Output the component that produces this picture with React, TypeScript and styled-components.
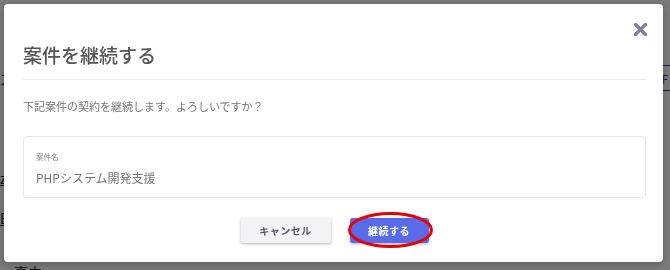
import styled, { createGlobalStyle } from "styled-components";

const GlobalStyle = createGlobalStyle`
  html, body {
    margin: 0;
    padding: 0;
    width: 670px;
    height: 270px;
    overflow: hidden;
    background: #ffffff;
    font-family: "Noto Sans CJK JP", "Noto Sans", sans-serif;
  }
`;

const Page = styled.div`
  position: relative;
  width: 670px;
  height: 270px;
  display: flex;
  justify-content: space-between;
`;

const SideList = styled.ul`
  list-style: none;
  margin: 0;
  padding: 70px 0 0 0;
  display: flex;
  flex-direction: column;
  gap: 0;
`;

const SideItem = styled.li<{ $top: number; $underline?: boolean }>`
  margin-top: ${(p) => p.$top}px;
  font-size: 14px;
  line-height: 16px;
  color: #222;
  text-decoration: ${(p) => (p.$underline ? "underline" : "none")};
`;

const HeadRow = styled.div`
  margin-top: 65px;
  width: 120px;
  height: 24px;
  border-top: 1px solid #3a3aa0;
  border-bottom: 1px solid #3a3aa0;
  display: flex;
  align-items: center;
  justify-content: flex-end;
  padding-right: 2px;
  font-size: 12px;
  color: #3a3aa0;
`;

const FootText = styled.div`
  position: absolute;
  left: 14px;
  top: 262px;
  font-size: 14px;
  color: #222;
`;

const Overlay = styled.div`
  position: fixed;
  inset: 0;
  background: rgba(0, 0, 0, 0.52);
  padding: 4px 0 0 4px;
`;

const Modal = styled.section`
  position: relative;
  width: 659px;
  height: 258px;
  box-sizing: border-box;
  background: #ffffff;
  border-radius: 4px;
  box-shadow: 0 2px 8px rgba(0, 0, 0, 0.25);
  padding: 37px 17px 0 19px;
  display: flex;
  flex-direction: column;
`;

const CloseButton = styled.button`
  position: absolute;
  top: 17px;
  right: 14px;
  width: 17px;
  height: 17px;
  padding: 0;
  border: none;
  background: transparent;
  display: flex;
  align-items: center;
  justify-content: center;
  cursor: pointer;
`;

const Header = styled.header`
  padding-bottom: 10px;
  border-bottom: 1px solid #ececec;
`;

const Title = styled.h2`
  margin: 0;
  font-size: 19px;
  line-height: 28px;
  font-weight: 500;
  color: #555555;
`;

const Message = styled.p`
  margin: 16px 0 0;
  font-size: 11px;
  line-height: 20px;
  color: #777777;
`;

const InfoCard = styled.div`
  margin-top: 20px;
  height: 62px;
  box-sizing: border-box;
  border: 1px solid #e6e6e6;
  border-radius: 4px;
  padding: 13px 12px 0;
  display: flex;
  flex-direction: column;
  gap: 4px;
`;

const FieldLabel = styled.span`
  font-size: 7.5px;
  line-height: 14px;
  color: #888888;
`;

const FieldValue = styled.span`
  font-size: 12px;
  line-height: 20px;
  color: #777777;
`;

const Actions = styled.div`
  margin-top: 20px;
  display: flex;
  justify-content: center;
  gap: 19px;
`;

const ActionButton = styled.button<{ $primary?: boolean }>`
  position: relative;
  height: 25px;
  width: ${(p) => (p.$primary ? 79 : 90)}px;
  border: none;
  border-radius: 3px;
  font-family: inherit;
  font-size: 10px;
  font-weight: 700;
  letter-spacing: 0.5px;
  color: ${(p) => (p.$primary ? "#ffffff" : "#555566")};
  background: ${(p) => (p.$primary ? "#5a6be9" : "#f3f3f6")};
  box-shadow: 0 1px 3px rgba(0, 0, 0, 0.3);
  cursor: pointer;
`;

const Highlight = styled.svg`
  position: absolute;
  left: -2px;
  top: -6px;
  overflow: visible;
  pointer-events: none;
`;

export default function App() {
  return (
    <>
      <GlobalStyle />
      <Page>
        <SideList>
          <SideItem $top={0}>ズ</SideItem>
          <SideItem $top={84} $underline>
            z
          </SideItem>
          <SideItem $top={24} $underline>
            E
          </SideItem>
        </SideList>
        <HeadRow>F</HeadRow>
        <FootText>事由</FootText>
      </Page>
      <Overlay>
        <Modal>
          <CloseButton aria-label="閉じる">
            <svg width="13" height="13" viewBox="0 0 13 13">
              <path
                d="M1.5 1.5 L11.5 11.5 M11.5 1.5 L1.5 11.5"
                stroke="#7f7d9f"
                strokeWidth="3.2"
                strokeLinecap="round"
              />
            </svg>
          </CloseButton>
          <Header>
            <Title>案件を継続する</Title>
          </Header>
          <Message>下記案件の契約を継続します。よろしいですか？</Message>
          <InfoCard>
            <FieldLabel>案件名</FieldLabel>
            <FieldValue>PHPシステム開発支援</FieldValue>
          </InfoCard>
          <Actions>
            <ActionButton>キャンセル</ActionButton>
            <ActionButton $primary>
              継続する
              <Highlight width="85" height="36" viewBox="0 0 85 36">
                <ellipse
                  cx="42.5"
                  cy="18"
                  rx="41"
                  ry="16.5"
                  fill="none"
                  stroke="#e60000"
                  strokeWidth="3"
                />
              </Highlight>
            </ActionButton>
          </Actions>
        </Modal>
      </Overlay>
    </>
  );
}
